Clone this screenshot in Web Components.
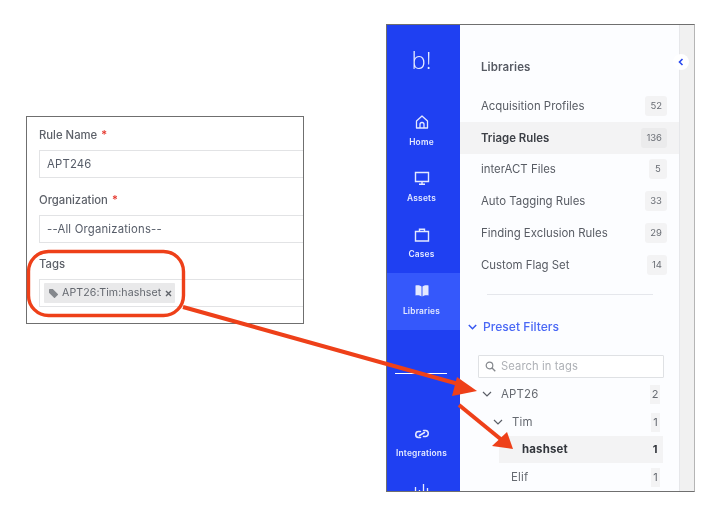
<!DOCTYPE html>
<html>
<head>
<meta charset="utf-8">
<style>
  html, body { margin: 0; padding: 0; background: #fff; }
  body { width: 714px; height: 510px; overflow: hidden; position: relative; font-family: Inter, "Liberation Sans", sans-serif; }
  .stage { display: flex; align-items: flex-start; padding: 24px 0 0 26px; }
</style>
</head>
<body>
<div class="stage">
  <rule-form>
    <form-field label="Rule Name" required>APT246</form-field>
    <form-field label="Organization" required>--All Organizations--</form-field>
    <form-field label="Tags"><tag-chip>APT26:Tim:hashset</tag-chip></form-field>
  </rule-form>
  <app-window>
    <side-nav slot="nav">
      <nav-item icon="home">Home</nav-item>
      <nav-item icon="monitor">Assets</nav-item>
      <nav-item icon="case">Cases</nav-item>
      <nav-item icon="book" active>Libraries</nav-item>
      <nav-item icon="link" slot="bottom">Integrations</nav-item>
      <nav-item icon="bars" slot="bottom"></nav-item>
    </side-nav>
    <lib-panel>
      <lib-row count="52">Acquisition Profiles</lib-row>
      <lib-row count="136" active>Triage Rules</lib-row>
      <lib-row count="5">interACT Files</lib-row>
      <lib-row count="33">Auto Tagging Rules</lib-row>
      <lib-row count="29">Finding Exclusion Rules</lib-row>
      <lib-row count="14">Custom Flag Set</lib-row>
      <tree-row slot="tree" count="2" depth="0" open>APT26</tree-row>
      <tree-row slot="tree" count="1" depth="1" open>Tim</tree-row>
      <tree-row slot="tree" count="1" depth="2" active>hashset</tree-row>
      <tree-row slot="tree" count="1" depth="3">Elif</tree-row>
    </lib-panel>
  </app-window>
</div>
<note-arrows></note-arrows>

<script>
// Left card with the rule form
class RuleForm extends HTMLElement {
  constructor() {
    super();
    this.attachShadow({ mode: 'open' });
    this.shadowRoot.innerHTML = `
      <style>
        :host {
          display: block;
          box-sizing: border-box;
          width: 278px;
          height: 208px;
          margin-top: 92px;
          border: 1px solid #6f6f6f;
          padding: 10px 0 0 12px;
          background: #fff;
          overflow: hidden;
        }
        .blur { filter: blur(.35px); }
      </style>
      <div class="blur"><slot></slot></div>
    `;
  }
}

class FormField extends HTMLElement {
  constructor() {
    super();
    this.attachShadow({ mode: 'open' });
  }

  connectedCallback() {
    const star = this.hasAttribute('required') ? '<i>*</i>' : '';
    this.shadowRoot.innerHTML = `
      <style>
        :host { display: block; margin-bottom: 13.500px; }
        .label {
          font: 500 11.300px/16px Inter, "Liberation Sans", sans-serif;
          color: #5d6169;
          height: 16px;
          margin-bottom: 7px;
        }
        i { color: #e5352b; font-style: normal; margin-left: 1px; }
        .box {
          box-sizing: border-box;
          height: 28px;
          border: 1px solid #e2e3e5;
          border-right: 0;
          display: flex;
          align-items: center;
          padding-left: 7px;
          font: 400 11.300px/16px Inter, "Liberation Sans", sans-serif;
          letter-spacing: .2px;
          color: #565c68;
        }
        .box.tags { padding-left: 4px; }
      </style>
      <div class="label">${this.getAttribute('label')} ${star}</div>
      <div class="box ${this.getAttribute('label') === 'Tags' ? 'tags' : ''}"><slot></slot></div>
    `;
  }
}

class TagChip extends HTMLElement {
  constructor() {
    super();
    this.attachShadow({ mode: 'open' });
    this.shadowRoot.innerHTML = `
      <style>
        :host {
          display: inline-flex;
          align-items: center;
          box-sizing: border-box;
          width: 131px;
          height: 20px;
          padding-left: 5px;
          background: #e9e9ea;
          border-radius: 1px;
          font: 400 10.600px/14px Inter, "Liberation Sans", sans-serif;
          letter-spacing: .1px;
          color: #63676e;
          white-space: nowrap;
        }
        svg { flex: none; }
        .tag { margin-right: 4px; }
        .x { margin-left: 4px; }
      </style>
      <svg class="tag" width="9" height="9" viewBox="0 0 9 9"><path d="M0 .8C0 .3.3 0 .8 0h3l5 5c.3.3.3.7 0 1L6 8.800c-.3.3-.7.3-1 0L0 3.800z" fill="#85888d"/></svg>
      <slot></slot>
      <svg class="x" width="7" height="7" viewBox="0 0 7 7"><path d="M1 1l5 5M6 1L1 6" stroke="#5f6369" stroke-width="1.400"/></svg>
    `;
  }
}

// Right window: blue rail, list panel, grey strip
class AppWindow extends HTMLElement {
  constructor() {
    super();
    this.attachShadow({ mode: 'open' });
    this.shadowRoot.innerHTML = `
      <style>
        :host {
          display: block;
          position: relative;
          box-sizing: border-box;
          width: 309px;
          height: 468px;
          margin-left: 82px;
          border: 1px solid #6f6f6f;
          border-right-color: #b5b5b5;
          background: #f1f1f1;
        }
        .inner { display: flex; height: 100%; filter: blur(.35px); }
        .main { width: 219px; height: 100%; background: #fcfdff; border-right: 1px solid #e6e7ea; overflow: hidden; }
        .toggle {
          position: absolute;
          left: 286px;
          top: 29px;
          width: 16px;
          height: 16px;
          border-radius: 50%;
          background: #fff;
          display: flex;
          align-items: center;
          justify-content: center;
        }
      </style>
      <div class="inner">
        <slot name="nav"></slot>
        <div class="main"><slot></slot></div>
      </div>
      <div class="toggle"><svg width="6" height="8" viewBox="0 0 6 8"><path d="M4.500 1L1.500 4l3 3" fill="none" stroke="#2747ee" stroke-width="1.600"/></svg></div>
    `;
  }
}

class SideNav extends HTMLElement {
  constructor() {
    super();
    this.attachShadow({ mode: 'open' });
    this.shadowRoot.innerHTML = `
      <style>
        :host {
          display: block;
          flex: none;
          width: 73px;
          height: 100%;
          background: #1f40f2;
          overflow: hidden;
        }
        .logo {
          height: 79px;
          box-sizing: border-box;
          padding: 20px 4px 0 0;
          text-align: center;
          color: #e9edff;
          font: 300 24px/30px "Open Sans", "Liberation Sans", sans-serif;
        }
        .rule { height: 1px; background: #fff; margin: 43px 13px 0 8px; }
        .bottom { margin-top: 42px; }
      </style>
      <div class="logo">b!</div>
      <slot></slot>
      <div class="rule"></div>
      <div class="bottom"><slot name="bottom"></slot></div>
    `;
  }
}

const NAV_ICONS = {
  home: '<path d="M2.500 7L8 2l5.500 5v7h-11zM6 14v-3.500a2 2 0 0 1 4 0V14" fill="none" stroke="currentColor" stroke-width="1.300" stroke-linejoin="round"/>',
  monitor: '<path d="M1.500 2.500h13v9h-13z" fill="none" stroke="currentColor" stroke-width="1.400"/><path d="M8 11.500v2.500M5 14.300h6" stroke="currentColor" stroke-width="1.400"/>',
  case: '<path d="M1.500 4.500h13v9.500h-13zM5.500 4.500V2.300h5v2.200" fill="none" stroke="currentColor" stroke-width="1.400"/>',
  book: '<path d="M1.500 2.500c2.500-.5 4.500 0 6 1v10c-1.500-1-3.500-1.500-6-1zM14.500 2.500c-2.500-.5-4.500 0-6 1v10c1.500-1 3.500-1.500 6-1z" fill="currentColor"/>',
  link: '<path d="M6.500 5.500H5a3 3 0 0 0-.5 6h2M9.500 10.500H11a3 3 0 0 0 .5-6h-2M5.500 9.500l5-3" fill="none" stroke="currentColor" stroke-width="1.500" stroke-linecap="round"/>',
  bars: '<path d="M1.500 5v11M5.500 8v8M9.500 2v14M13.500 6v10" stroke="currentColor" stroke-width="1.300"/>'
};

class NavItem extends HTMLElement {
  constructor() {
    super();
    this.attachShadow({ mode: 'open' });
  }

  connectedCallback() {
    this.shadowRoot.innerHTML = `
      <style>
        :host {
          display: flex;
          flex-direction: column;
          align-items: center;
          box-sizing: border-box;
          height: 56.400px;
          padding: 10px 4px 0 0;
          color: #e4e9ff;
          font: 600 8.400px/12px Inter, "Liberation Sans", sans-serif;
          letter-spacing: .2px;
        }
        :host([active]) { background: #3558fb; }
        svg { display: block; margin-bottom: 5.500px; }
      </style>
      <svg width="16" height="16" viewBox="0 0 16 16">${NAV_ICONS[this.getAttribute('icon')]}</svg>
      <slot></slot>
    `;
  }
}

// Panel with the libraries list and the preset filters tree
class LibPanel extends HTMLElement {
  constructor() {
    super();
    this.attachShadow({ mode: 'open' });
    this.shadowRoot.innerHTML = `
      <style>
        :host { display: block; padding-top: 33px; font-family: Inter, "Liberation Sans", sans-serif; }
        h2 {
          margin: 0 0 14px 21px;
          font: 600 11.500px/18px Inter, "Liberation Sans", sans-serif;
          color: #565a63;
          letter-spacing: .1px;
        }
        hr { border: 0; height: 1px; background: #e5e7ec; margin: 13px 26px 0 27px; }
        .preset {
          display: flex;
          align-items: center;
          gap: 6px;
          margin: 24px 0 20px 8px;
          height: 16px;
          font: 500 12.100px/16px Inter, "Liberation Sans", sans-serif;
          color: #4a68f5;
        }
        .search {
          display: flex;
          align-items: center;
          gap: 5px;
          box-sizing: border-box;
          width: 186px;
          height: 23px;
          margin-left: 18px;
          padding-left: 6px;
          border: 1px solid #dfe1e4;
          border-radius: 1px;
          background: #fff;
          font: 400 11.200px/14px Inter, "Liberation Sans", sans-serif;
          letter-spacing: .1px;
          color: #aeb1b6;
        }
        .tree { padding-top: 2px; }
      </style>
      <h2>Libraries</h2>
      <slot></slot>
      <hr>
      <div class="preset">
        <svg width="9" height="6" viewBox="0 0 9 6"><path d="M.8 1l3.700 3.700L8.200 1" fill="none" stroke="#3556f0" stroke-width="1.500"/></svg>
        Preset Filters
      </div>
      <div class="search">
        <svg width="11" height="11" viewBox="0 0 11 11"><circle cx="4.500" cy="4.500" r="3.300" fill="none" stroke="#85888d" stroke-width="1.200"/><path d="M7 7l3.300 3.300" stroke="#85888d" stroke-width="1.300"/></svg>
        Search in tags
      </div>
      <div class="tree"><slot name="tree"></slot></div>
    `;
  }
}

class LibRow extends HTMLElement {
  constructor() {
    super();
    this.attachShadow({ mode: 'open' });
  }

  connectedCallback() {
    this.shadowRoot.innerHTML = `
      <style>
        :host {
          display: flex;
          align-items: center;
          justify-content: space-between;
          box-sizing: border-box;
          height: 31.800px;
          padding: 0 12px 0 21px;
          font: 400 11.400px/16px Inter, "Liberation Sans", sans-serif;
          letter-spacing: 0;
          color: #585c64;
        }
        :host([active]) { background: #f3f3f4; font-weight: 600; color: #3d4047; }
        .n {
          min-width: 8px;
          height: 20px;
          padding: 0 5px;
          border-radius: 3px;
          background: #f3f3f4;
          font-size: 9.500px;
          font-weight: 400;
          line-height: 20px;
          text-align: center;
          color: #696d74;
        }
        :host([active]) .n { background: #ebebec; }
      </style>
      <slot></slot><span class="n">${this.getAttribute('count')}</span>
    `;
  }
}

class TreeRow extends HTMLElement {
  constructor() {
    super();
    this.attachShadow({ mode: 'open' });
  }

  connectedCallback() {
    const open = this.hasAttribute('open')
      ? '<svg width="10" height="6" viewBox="0 0 10 6"><path d="M1 1l4 4 4-4" fill="none" stroke="#5a5e66" stroke-width="1.200"/></svg>'
      : '';
    this.shadowRoot.innerHTML = `
      <style>
        :host {
          display: flex;
          align-items: center;
          gap: 9px;
          box-sizing: border-box;
          font: 400 11.400px/16px Inter, "Liberation Sans", sans-serif;
          letter-spacing: .2px;
          color: #666a71;
        }
        :host([depth="0"]) { height: 29px; margin-left: 22px; width: 178px; }
        :host([depth="1"]) { height: 27px; margin-left: 33px; width: 167px; }
        :host([depth="2"]) {
          height: 27px;
          margin-left: 39px;
          width: 164px;
          padding: 0 5px 0 23px;
          background: #f3f3f4;
          font-weight: 700;
          color: #33363c;
        }
        :host([depth="3"]) { height: 29px; margin-left: 51px; width: 149px; }
        .n {
          margin-left: auto;
          width: 9px;
          height: 19px;
          background: #f3f3f4;
          line-height: 19px;
          text-align: center;
          font-size: 11px;
          letter-spacing: 0;
        }
        :host([depth="0"]) .n { width: 10px; }
        :host([depth="2"]) .n { background: none; width: 6px; }
      </style>
      ${open}<slot></slot><span class="n">${this.getAttribute('count')}</span>
    `;
  }
}

// Red callouts drawn over both screenshots
class NoteArrows extends HTMLElement {
  constructor() {
    super();
    this.attachShadow({ mode: 'open' });
    this.shadowRoot.innerHTML = `
      <style>
        :host { position: absolute; left: 0; top: 0; width: 714px; height: 510px; pointer-events: none; }
        svg { display: block; }
      </style>
      <svg width="714" height="510" viewBox="0 0 714 510">
        <rect x="28.500" y="251.500" width="155" height="64" rx="20" fill="none" stroke="#ee4019" stroke-width="3.400"/>
        <path d="M183 307L462 385" stroke="#ee4019" stroke-width="4"/>
        <path d="M477 391L457 377L452 396z" fill="#ee4019"/>
        <path d="M459 405L503 441" stroke="#ee4019" stroke-width="4"/>
        <path d="M513 449L507 432L492 446z" fill="#ee4019"/>
      </svg>
    `;
  }
}

customElements.define('rule-form', RuleForm);
customElements.define('form-field', FormField);
customElements.define('tag-chip', TagChip);
customElements.define('app-window', AppWindow);
customElements.define('side-nav', SideNav);
customElements.define('nav-item', NavItem);
customElements.define('lib-panel', LibPanel);
customElements.define('lib-row', LibRow);
customElements.define('tree-row', TreeRow);
customElements.define('note-arrows', NoteArrows);
</script>
</body>
</html>
